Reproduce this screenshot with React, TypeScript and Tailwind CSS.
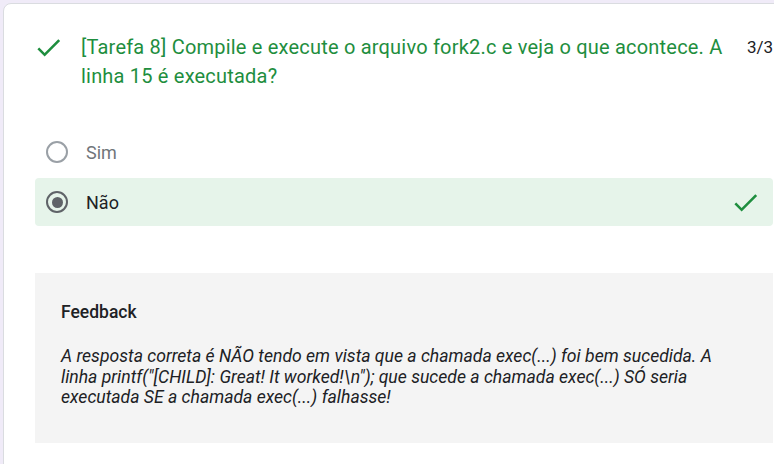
import React from "react";

function Check({ className }: { className?: string }) {
  return (
    <svg viewBox="0 0 24 24" className={className} fill="currentColor">
      <path d="M9 16.17L4.83 12l-1.42 1.41L9 19 21 7l-1.41-1.41z" />
    </svg>
  );
}

function Radio({ checked }: { checked?: boolean }) {
  return (
    <div
      className={
        checked
          ? "w-[22px] h-[22px] rounded-full border-2 border-[#5f6368] flex items-center justify-center"
          : "w-[22px] h-[22px] rounded-full border-2 border-[#9aa0a6]"
      }
    >
      {checked && <div className="w-[11px] h-[11px] rounded-full bg-[#5f6368]" />}
    </div>
  );
}

export default function App() {
  return (
    <div
      className="w-[774px] h-[464px] overflow-hidden bg-[#f0ebf8] pt-[3px] pl-[3px]"
      style={{ fontFamily: "Roboto, 'Liberation Sans', sans-serif" }}
    >
      <div className="w-[820px] h-[480px] bg-white rounded-lg border border-[#dadce0] pl-[31px] pt-[29px]">
        <div className="w-[738px]">
          <div className="flex items-start">
            <Check className="w-[31px] h-[31px] text-[#1e8e3e] -ml-[2px] mt-[-1px] shrink-0" />
            <div className="ml-[17px] flex-1 text-[20px] tracking-[0.2px] leading-[29px] text-[#1e8e3e]">
              [Tarefa 8] Compile e execute o arquivo fork2.c e veja o que acontece. A linha 15 é executada?
            </div>
            <div className="ml-[10px] text-[17px] leading-[29px] text-[#202124]">3/3</div>
          </div>

          <div className="mt-[37px] flex flex-col gap-[2px]">
            <div className="h-[48px] flex items-center pl-[11px]">
              <Radio />
              <span className="ml-[18px] text-[18px] text-[#70757a]">Sim</span>
            </div>
            <div className="h-[48px] flex items-center pl-[11px] pr-[12px] bg-[#e6f4ea] rounded-[4px]">
              <Radio checked />
              <span className="ml-[18px] text-[18px] text-[#202124] flex-1">Não</span>
              <Check className="w-[31px] h-[31px] text-[#1e8e3e]" />
            </div>
          </div>

          <div className="mt-[47px] h-[170px] bg-[#f4f4f4] pl-[26px] pt-[27px]">
            <div className="text-[17.5px] leading-[24px] font-medium text-[#202124]">Feedback</div>
            <p className="mt-[22px] w-[680px] text-[17.6px] leading-[20.5px] italic text-[#202124]">
              A resposta correta é NÃO tendo em vista que a chamada exec(...) foi bem sucedida. A linha
              printf("[CHILD]: Great! It worked!\n"); que sucede a chamada exec(...) SÓ seria executada SE a
              chamada exec(...) falhasse!
            </p>
          </div>
        </div>
      </div>
    </div>
  );
}
